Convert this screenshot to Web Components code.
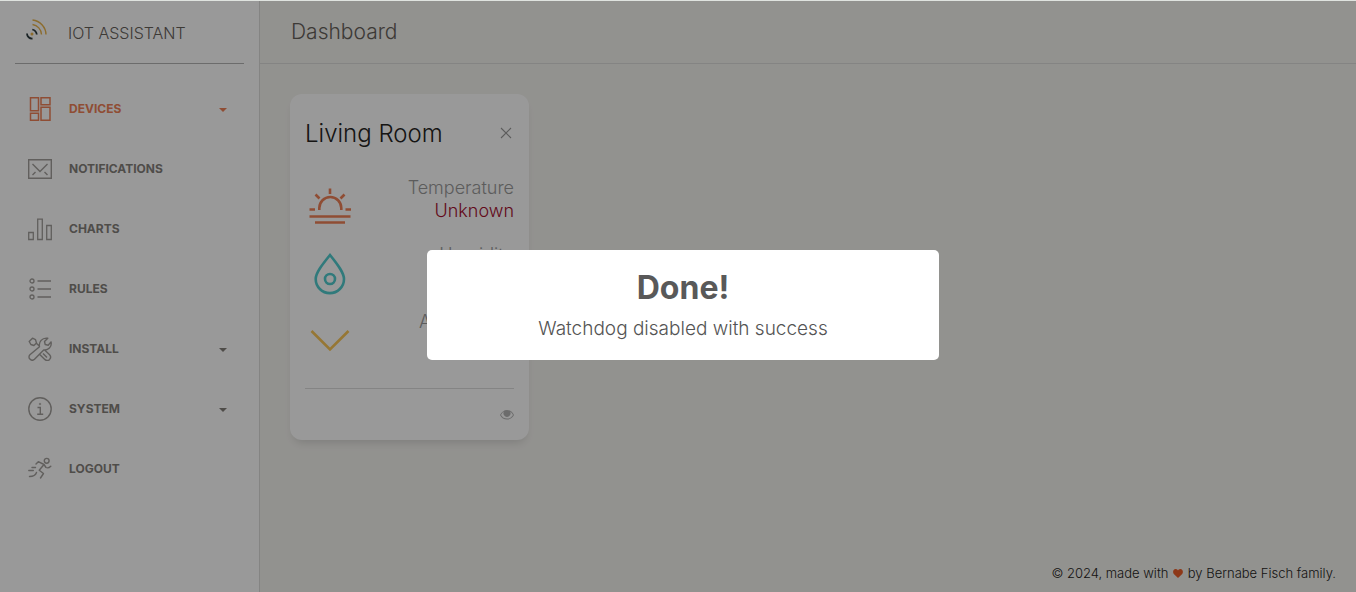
<!DOCTYPE html>
<html lang="en">
<head>
<meta charset="utf-8">
<title>IOT Assistant - Dashboard</title>
<style>
  body { margin: 0; font-family: Inter, "Open Sans", sans-serif; font-weight: 300; color: #252422; }
</style>
</head>
<body>
<iot-app>
  <iot-sidebar slot="sidebar">
    <nav-item icon="devices" active expandable>DEVICES</nav-item>
    <nav-item icon="mail">NOTIFICATIONS</nav-item>
    <nav-item icon="charts">CHARTS</nav-item>
    <nav-item icon="rules">RULES</nav-item>
    <nav-item icon="tools" expandable>INSTALL</nav-item>
    <nav-item icon="info" expandable>SYSTEM</nav-item>
    <nav-item icon="run">LOGOUT</nav-item>
  </iot-sidebar>
  <page-header slot="header">Dashboard</page-header>
  <device-card>
    <span slot="title">Living Room</span>
    <sensor-row icon="sun" tone="warm">Temperature<span slot="value">Unknown</span></sensor-row>
    <sensor-row icon="drop" tone="cool">Humidity</sensor-row>
    <sensor-row icon="down" tone="amber">Automation</sensor-row>
  </device-card>
  <page-footer slot="footer"></page-footer>
</iot-app>
<alert-box>
  <span slot="title">Done!</span>
  Watchdog disabled with success
</alert-box>

<script>
const ICONS = {
  logo: '<svg width="24" height="24" viewBox="0 0 24 24" fill="none" stroke-width="1.4"><g stroke="#2c3b3f" stroke-width="1.8"><path d="M8.300 11.500a6 6 0 0 1 4.500 5M3 15.500a5 5 0 0 0 5.500 5"/></g><g stroke="#e9b44c"><path d="M8.500 6.500a10.500 10.500 0 0 1 9 10M8.500 2a15 15 0 0 1 13.500 14.500"/></g><circle cx="8" cy="16" r="1.500" fill="#e9b44c"/></svg>',
  devices: '<svg width="24" height="24" viewBox="0 0 24 24" fill="none" stroke="currentColor" stroke-width="1.500"><path d="M2.500.7h8v13h-8zM13 .7h9v7h-9zM2.500 16.300h8v7h-8zM13 10.300h9v13h-9z"/></svg>',
  mail: '<svg width="24" height="24" viewBox="0 0 24 24" fill="none" stroke="currentColor" stroke-width="1.400"><path d="M.7 2.700h22.600v18.600H.7zM4.500 7l7.500 7.500L19.500 7M4.500 18l3-3M19.500 18l-3-3"/></svg>',
  charts: '<svg width="24" height="24" viewBox="0 0 24 24" fill="none" stroke="currentColor" stroke-width="1.300"><path d="M.7 15.500h4.600v7H.7zM9.700 2.200h4.600v20.300H9.700zM18.700 8.500h4.600v14h-4.600z"/></svg>',
  rules: '<svg width="24" height="24" viewBox="0 0 24 24" fill="none" stroke="currentColor" stroke-width="1.300"><circle cx="4" cy="4" r="2"/><circle cx="4" cy="12" r="2"/><circle cx="4" cy="20" r="2"/><path d="M9.500 4H23M9.500 12H23M9.500 20H23"/></svg>',
  tools: '<svg width="24" height="24" viewBox="0 0 24 24" fill="none" stroke="currentColor" stroke-width="1.400" stroke-linejoin="round"><path d="M11.500 9.800C10.500 5 14 .3 19.800 1.200L16.500 4.500l.7 3 3 .7 2.800-3.300c1.200 5-3 8.800-7.300 8L6.500 22.300c-1.400 1.300-3.400 1-4.600-.2-1.200-1.200-1.200-3.200 0-4.400zM11.500 17.200l5.300 5.200c1.500 1.300 3.500 1.200 4.800 0 1.200-1.400 1.200-3.400 0-4.700l-5.200-4.900M4.500 1.200l3 1.500 1 3.300-2.600 2.500-3-1L1.200 4.500zM8.200 6l3.500 3.500M15 16.500l4 4"/></svg>',
  info: '<svg width="24" height="24" viewBox="0 0 24 24" fill="none" stroke="currentColor" stroke-width="1.400"><circle cx="12" cy="12" r="11.200"/><path d="M9.500 10.500h2.800v6.800M9.200 17.300h6"/><circle cx="12" cy="7" r=".8" fill="currentColor" stroke-width=".5"/></svg>',
  run: '<svg width="24" height="24" viewBox="0 0 24 24" fill="none" stroke="currentColor" stroke-width="1.400" stroke-linejoin="round" stroke-linecap="round"><circle cx="18.700" cy="3.800" r="2.400"/><path d="M8 7l2.300-2.300L16 7.500l-4.800 5.800 4.300 3.200-3 4.500M16 7.500l2 3c1.500.8 3 .5 4.800-1.300M8.500 15.500c-.8 2.500-3.300 4-7 4M4 10.500h3.500M.8 13.500h4.500"/></svg>',
  sun: '<svg width="48" height="48" viewBox="0 0 48 48" fill="none" stroke="currentColor" stroke-width="2.600"><path d="M13.300 28v-2a11 11 0 0 1 22 0v2M24 6.500V12M9.500 12.500l4 4M38.500 12.500l-4 4M3.500 27.500H9M39.500 27.500H45M3.500 34.500h41M9 40.500h30"/></svg>',
  drop: '<svg width="48" height="48" viewBox="0 0 48 48" fill="none" stroke="currentColor" stroke-width="2.600"><path d="M24 6C15.500 16.500 9.700 24 9.700 30a14 14 0 0 0 28.300 0C38 24 32.500 16.500 24 6z"/><circle cx="24" cy="30" r="5"/></svg>',
  down: '<svg width="48" height="48" viewBox="0 0 48 48" fill="none" stroke="currentColor" stroke-width="2.600"><path d="M5.500 15L24 33.300 42.500 15"/></svg>',
  cross: '<svg width="12" height="12" viewBox="0 0 12 12" fill="none" stroke="currentColor" stroke-width="1.100"><path d="M1 1l10 10M11 1L1 11"/></svg>',
  eye: '<svg width="14" height="10" viewBox="0 0 14 10"><path fill="currentColor" fill-rule="evenodd" d="M7 0c3 0 5.500 2 7 5-1.500 3-4 4.500-7 4.500S1.500 8 0 5C1.500 2 4 0 7 0zM4 1.600C2.600 2.300 1.700 3.600 1 5c1.300 2.300 3.500 3.600 6 3.600S11.700 7.300 13 5c-.7-1.400-1.700-2.700-3-3.400A3.500 3.500 0 1 1 4 1.600z"/></svg>',
  heart: '<svg width="10" height="9" viewBox="0 0 10 9"><path fill="#eb5e28" d="M5 9L.8 4.900C-.5 3.500 0 .3 2.600.1 4 0 4.600.8 5 1.500 5.400.8 6 0 7.400.1 10 .3 10.500 3.500 9.200 4.900z"/></svg>'
};

function define(name, template) {
  customElements.define(name, class extends HTMLElement {
    connectedCallback() {
      if (this.shadowRoot) return;
      this.attachShadow({ mode: "open" }).innerHTML = template(this);
    }
  });
}

define("iot-app", () => `
  <style>
    :host { display: grid; grid-template-columns: 260px 1fr; min-height: 100vh; box-sizing: border-box; border-top: 1px solid #dfe3df; background: #f4f3ef; }
    .main { display: flex; flex-direction: column; min-width: 0; }
    main { flex: 1; display: flex; flex-wrap: wrap; align-items: flex-start; gap: 30px; padding: 30px; }
  </style>
  <slot name="sidebar"></slot>
  <div class="main">
    <slot name="header"></slot>
    <main><slot></slot></main>
    <slot name="footer"></slot>
  </div>`);

define("iot-sidebar", () => `
  <style>
    :host { display: block; background: #fff; border-right: 1px solid #dddddb; }
    .brand { display: flex; align-items: center; gap: 20px; height: 62px; margin: 0 15px; padding-left: 9px; border-bottom: 1px solid #b4b4b4; color: #66615b; font-size: 16px; text-decoration: none; }
    .brand svg { display: block; margin-bottom: 4px; }
    .brand span { padding-top: 2px; }
    nav { padding-top: 15px; }
  </style>
  <a class="brand" href="#">${ICONS.logo}<span>IOT ASSISTANT</span></a>
  <nav><slot></slot></nav>`);

define("nav-item", el => `
  <style>
    :host { display: block; --tone: #66615b; --icon-opacity: .75; }
    :host([active]) { --tone: #ef8157; --icon-opacity: 1; }
    a { display: flex; align-items: center; height: 60px; padding: 0 32px 0 28px; color: var(--tone); font-size: 12px; font-weight: 700; text-decoration: none; opacity: .8; }
    :host([active]) a { opacity: 1; }
    svg { opacity: var(--icon-opacity); }
    .label { flex: 1; padding: 0 0 2px 17px; }
    .caret { border: 4px solid transparent; border-top-color: currentColor; border-bottom: 0; margin-top: 2px; }
  </style>
  <a href="#">${ICONS[el.getAttribute("icon")]}<span class="label"><slot></slot></span>${el.hasAttribute("expandable") ? '<i class="caret"></i>' : ""}</a>`);

define("page-header", () => `
  <style>
    :host { display: block; border-bottom: 1px solid #dddddb; padding: 0 31px; }
    h1 { margin: 0; font-size: 21px; line-height: 62px; font-weight: 300; color: #66615b; }
  </style>
  <h1><slot></slot></h1>`);

define("device-card", () => `
  <style>
    :host { display: block; width: 239px; box-sizing: border-box; padding: 15px; background: #fff; border-radius: 12px; box-shadow: 0 6px 10px -4px rgba(0, 0, 0, .15); }
    header { display: flex; justify-content: space-between; align-items: center; height: 48px; margin-bottom: 19px; }
    h2 { margin: 0; font-size: 24px; font-weight: 300; color: #252422; }
    button { display: flex; padding: 2px; margin: 0; border: 0; background: none; color: #9a9a9a; }
    footer { display: flex; justify-content: flex-end; align-items: center; height: 20px; margin-top: 11px; padding-top: 16px; border-top: 1px solid #dddddd; }
    footer button { padding: 0; color: #b4b4b4; }
  </style>
  <header><h2><slot name="title"></slot></h2><button aria-label="Remove">${ICONS.cross}</button></header>
  <slot></slot>
  <footer><button aria-label="Show details">${ICONS.eye}</button></footer>`);

define("sensor-row", el => `
  <style>
    :host { display: flex; justify-content: space-between; height: 67px; font-size: 18px; line-height: 23px; text-align: right; color: #9a9a9a; --tone: #ef8157; }
    :host([tone="cool"]) { --tone: #51cbce; }
    :host([tone="amber"]) { --tone: #fbc658; }
    svg { display: block; margin: 6px 0 0 1px; color: var(--tone); }
    .value { color: #a50f30; min-height: 23px; }
  </style>
  ${ICONS[el.getAttribute("icon")]}
  <div><div><slot></slot></div><div class="value"><slot name="value"></slot></div></div>`);

define("page-footer", () => `
  <style>
    :host { display: block; padding: 0 20px 9px; font-size: 13px; line-height: 20px; text-align: right; }
    svg { margin: 0 1px; }
  </style>
  © 2024, made with ${ICONS.heart} by Bernabe Fisch family.`);

define("alert-box", () => `
  <style>
    :host { position: fixed; inset: 1px 0 0; display: flex; align-items: center; justify-content: center; padding: 17px 0 0 10px; background: rgba(0, 0, 0, .4); }
    section { width: 512px; max-width: 90%; box-sizing: border-box; padding: 18px 20px; border-radius: 5px; background: #fff; text-align: center; color: #545454; }
    h2 { margin: 0 0 8px; font-size: 32px; line-height: 40px; font-weight: 700; color: #595959; }
    p { margin: 0; font-size: 19px; line-height: 26px; }
  </style>
  <section role="alertdialog" aria-modal="true" aria-labelledby="title">
    <h2 id="title"><slot name="title"></slot></h2>
    <p><slot></slot></p>
  </section>`);
</script>
</body>
</html>
